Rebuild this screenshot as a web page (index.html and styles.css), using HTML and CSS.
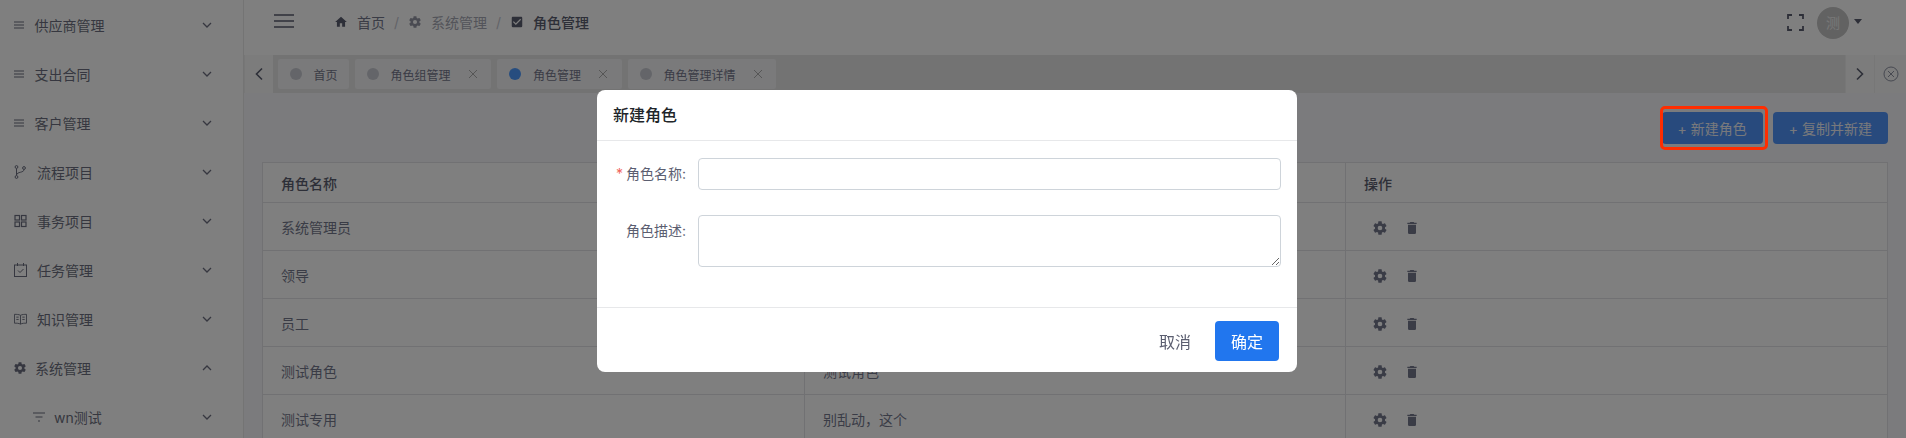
FILE: index.html
```html
<!DOCTYPE html>
<html lang="zh-CN">
<head>
    <meta charset="UTF-8">
    <meta name="viewport" content="width=device-width, initial-scale=1.0">
    <title>角色管理</title>
    <link rel="stylesheet" href="styles.css">
</head>
<body>
    <svg class="sprite" width="0" height="0">
        <symbol id="i-gear" viewBox="0 0 24 24"><path fill="currentColor" d="M12,15.5A3.5,3.5 0 0,1 8.5,12A3.5,3.5 0 0,1 12,8.5A3.5,3.5 0 0,1 15.5,12A3.5,3.5 0 0,1 12,15.5M19.43,12.97C19.47,12.65 19.5,12.33 19.5,12C19.5,11.67 19.47,11.34 19.43,11L21.54,9.37C21.73,9.22 21.78,8.95 21.66,8.73L19.66,5.27C19.54,5.05 19.27,4.96 19.05,5.05L16.56,6.05C16.04,5.66 15.5,5.32 14.87,5.07L14.5,2.42C14.46,2.18 14.25,2 14,2H10C9.75,2 9.54,2.18 9.5,2.42L9.13,5.07C8.5,5.32 7.96,5.66 7.44,6.05L4.95,5.05C4.73,4.96 4.46,5.05 4.34,5.27L2.34,8.73C2.21,8.95 2.27,9.22 2.46,9.37L4.57,11C4.53,11.34 4.5,11.67 4.5,12C4.5,12.33 4.53,12.65 4.57,12.97L2.46,14.63C2.27,14.78 2.21,15.05 2.34,15.27L4.34,18.73C4.46,18.95 4.73,19.03 4.95,18.95L7.44,17.94C7.96,18.34 8.5,18.68 9.13,18.93L9.5,21.58C9.54,21.82 9.75,22 10,22H14C14.25,22 14.46,21.82 14.5,21.58L14.87,18.93C15.5,18.67 16.04,18.34 16.56,17.94L19.05,18.95C19.27,19.03 19.54,18.95 19.66,18.73L21.66,15.27C21.78,15.05 21.73,14.78 21.54,14.63L19.43,12.97Z"/></symbol>
        <symbol id="i-trash" viewBox="0 0 24 24"><path fill="currentColor" d="M19,4H15.5L14.5,3H9.5L8.5,4H5V6H19M6,19A2,2 0 0,0 8,21H16A2,2 0 0,0 18,19V7H6V19Z"/></symbol>
        <symbol id="i-chev" viewBox="0 0 12 12"><path d="M2 4l4 4 4-4" fill="none" stroke="currentColor" stroke-width="1.3"/></symbol>
        <symbol id="i-menu" viewBox="0 0 10 10"><path d="M0 2h10M0 5h10M0 8h10" fill="none" stroke="currentColor" stroke-width="1.1"/></symbol>
        <symbol id="i-x" viewBox="0 0 10 10"><path d="M1 1l8 8M9 1l-8 8" fill="none" stroke="currentColor" stroke-width="0.8"/></symbol>
    </svg>

    <div class="app">
        <aside class="sidebar">
            <div class="nav-item"><svg class="nav-icon"><use href="#i-menu"/></svg><span>供应商管理</span><svg class="chev"><use href="#i-chev"/></svg></div>
            <div class="nav-item"><svg class="nav-icon"><use href="#i-menu"/></svg><span>支出合同</span><svg class="chev"><use href="#i-chev"/></svg></div>
            <div class="nav-item"><svg class="nav-icon"><use href="#i-menu"/></svg><span>客户管理</span><svg class="chev"><use href="#i-chev"/></svg></div>
            <div class="nav-item">
                <svg class="nav-icon wide" viewBox="0 0 13 14" fill="none" stroke="currentColor" stroke-width="1"><circle cx="2.5" cy="2" r="1.4"/><circle cx="2.5" cy="12" r="1.4"/><circle cx="10" cy="3" r="1.4"/><path d="M2.5 3.500v7M10 4.500c0 3.500-7 2-7.500 5.500"/></svg>
                <span>流程项目</span><svg class="chev"><use href="#i-chev"/></svg>
            </div>
            <div class="nav-item">
                <svg class="nav-icon wide" viewBox="0 0 13 13" fill="none" stroke="currentColor" stroke-width="1.2"><rect x="1" y="1" width="4.500" height="4.500"/><rect x="7.500" y="1" width="4.500" height="4.500"/><rect x="1" y="7.500" width="4.500" height="4.500"/><rect x="7.500" y="7.500" width="4.500" height="4.500"/></svg>
                <span>事务项目</span><svg class="chev"><use href="#i-chev"/></svg>
            </div>
            <div class="nav-item">
                <svg class="nav-icon wide" viewBox="0 0 13 14" fill="none" stroke="currentColor" stroke-width="1"><rect x="0.500" y="2" width="12" height="11.500"/><path d="M3.500 0v3M9.500 0v3M4 7.500l2 2 3.500-3.500"/></svg>
                <span>任务管理</span><svg class="chev"><use href="#i-chev"/></svg>
            </div>
            <div class="nav-item">
                <svg class="nav-icon wide" viewBox="0 0 14 12" fill="none" stroke="currentColor" stroke-width="1"><path d="M7 2C5 1 3 1 .5 1v9.500c2.500 0 4.500 0 6.500 1 2-1 4-1 6.500-1V1C11 1 9 1 7 2zM7 2v9.500M2.500 4h2.500M2.500 6.500h2.500M9 4h2.500M9 6.500h2.500"/></svg>
                <span>知识管理</span><svg class="chev"><use href="#i-chev"/></svg>
            </div>
            <div class="nav-item">
                <svg class="nav-icon gear"><use href="#i-gear"/></svg>
                <span>系统管理</span><svg class="chev up"><use href="#i-chev"/></svg>
            </div>
            <div class="nav-item sub">
                <svg class="nav-icon filter" viewBox="0 0 12 10" fill="none" stroke="currentColor" stroke-width="1.1"><path d="M0 1h12M2.500 5h7M5 9h2"/></svg>
                <span>wn测试</span><svg class="chev"><use href="#i-chev"/></svg>
            </div>
        </aside>

        <div class="main">
            <header class="topbar">
                <svg class="hamburger" viewBox="0 0 20 14" fill="none" stroke="currentColor" stroke-width="1.6"><path d="M0 1h20M0 7h20M0 13h20"/></svg>
                <nav class="crumbs">
                    <svg class="crumb-icon" viewBox="0 0 24 24"><path fill="currentColor" d="M10,20V14H14V20H19V12H22L12,3L2,12H5V20H10Z"/></svg>
                    <span>首页</span>
                    <i class="sep">/</i>
                    <svg class="crumb-icon muted"><use href="#i-gear"/></svg>
                    <span class="muted">系统管理</span>
                    <i class="sep">/</i>
                    <svg class="crumb-icon" viewBox="0 0 24 24"><path fill="currentColor" d="M19,3H5C3.890,3 3,3.890 3,5V19A2,2 0 0,0 5,21H19A2,2 0 0,0 21,19V5C21,3.890 20.100,3 19,3M10,17L5,12L6.410,10.590L10,14.170L17.590,6.580L19,8L10,17Z"/></svg>
                    <b>角色管理</b>
                </nav>
                <svg class="fullscreen" viewBox="0 0 17 17" fill="none" stroke="currentColor" stroke-width="1.800"><path d="M1 5V1h4M12 1h4v4M16 12v4h-4M5 16H1v-4"/></svg>
                <div class="avatar">测</div>
                <i class="caret"></i>
            </header>

            <div class="tabs">
                <div class="tab-arrow"><svg viewBox="0 0 10 14" fill="none" stroke="currentColor" stroke-width="1.600"><path d="M8 1.500L2.500 7 8 12.500"/></svg></div>
                <div class="tab-list">
                    <div class="tab"><i class="dot"></i>首页</div>
                    <div class="tab"><i class="dot"></i>角色组管理<svg class="tab-x"><use href="#i-x"/></svg></div>
                    <div class="tab active"><i class="dot"></i>角色管理<svg class="tab-x"><use href="#i-x"/></svg></div>
                    <div class="tab"><i class="dot"></i>角色管理详情<svg class="tab-x"><use href="#i-x"/></svg></div>
                </div>
                <div class="tab-arrow"><svg viewBox="0 0 10 14" fill="none" stroke="currentColor" stroke-width="1.600"><path d="M2 1.500L7.500 7 2 12.500"/></svg></div>
                <div class="tab-close"><svg viewBox="0 0 16 16" fill="none" stroke="currentColor" stroke-width="0.800"><circle cx="8" cy="8" r="7"/><path d="M5 5l6 6M11 5l-6 6"/></svg></div>
            </div>

            <div class="content">
                <div class="toolbar">
                    <button class="btn">+ 新建角色</button>
                    <button class="btn">+ 复制并新建</button>
                </div>
                <table class="grid">
                    <colgroup><col class="col-name"><col class="col-desc"><col></colgroup>
                    <thead>
                        <tr><th>角色名称</th><th>角色描述</th><th>操作</th></tr>
                    </thead>
                    <tbody>
                        <tr><td>系统管理员</td><td>系统管理员</td><td class="ops"><svg><use href="#i-gear"/></svg><svg><use href="#i-trash"/></svg></td></tr>
                        <tr><td>领导</td><td>领导</td><td class="ops"><svg><use href="#i-gear"/></svg><svg><use href="#i-trash"/></svg></td></tr>
                        <tr><td>员工</td><td>员工</td><td class="ops"><svg><use href="#i-gear"/></svg><svg><use href="#i-trash"/></svg></td></tr>
                        <tr><td>测试角色</td><td>测试角色</td><td class="ops"><svg><use href="#i-gear"/></svg><svg><use href="#i-trash"/></svg></td></tr>
                        <tr><td>测试专用</td><td>别乱动，这个</td><td class="ops"><svg><use href="#i-gear"/></svg><svg><use href="#i-trash"/></svg></td></tr>
                    </tbody>
                </table>
            </div>
        </div>
    </div>

    <div class="backdrop"></div>
    <div class="highlight"></div>

    <div class="modal">
        <div class="modal-head">新建角色</div>
        <div class="modal-body">
            <div class="field">
                <label><em>*</em>角色名称:</label>
                <input type="text">
            </div>
            <div class="field">
                <label>角色描述:</label>
                <textarea></textarea>
            </div>
        </div>
        <div class="modal-foot">
            <button class="btn-text">取消</button>
            <button class="btn-primary">确定</button>
        </div>
    </div>
</body>
</html>
```

FILE: styles.css
```css
* {
    box-sizing: border-box;
}

html, body {
    height: 100%;
}

body {
    margin: 0;
    overflow: hidden;
    background-color: #fff;
    color: #74788d;
    font-family: "Inter", "Noto Sans CJK SC", sans-serif;
    font-size: 14px;
}

.sprite {
    position: absolute;
}

.app {
    display: flex;
    height: 100%;
}

/* sidebar */
.sidebar {
    flex: 0 0 244px;
    border-right: 1px solid #e8e8e8;
    background-color: #fff;
}

.nav-item {
    display: flex;
    align-items: center;
    height: 49px;
    padding: 0 30px 0 14px;
    color: #6c6f80;
}

.nav-item span {
    flex: 1;
}

.nav-icon {
    flex: none;
    width: 10px;
    height: 10px;
    margin-right: 10.5px;
    margin-top: 1px;
}

.nav-icon.wide {
    width: 13px;
    height: 14px;
    margin-right: 10px;
}

.nav-icon.gear {
    width: 14px;
    height: 14px;
    margin-right: 8px;
    margin-left: -1px;
}

.nav-icon.filter {
    width: 12px;
    margin-left: 18.5px;
    margin-right: 9.5px;
}

.chev {
    width: 12px;
    height: 12px;
}

.chev.up {
    transform: rotate(180deg);
}

/* top bar */
.main {
    flex: 1;
    min-width: 0;
    display: flex;
    flex-direction: column;
}

.topbar {
    display: flex;
    align-items: flex-start;
    flex: 0 0 55px;
    padding-left: 30px;
    padding-right: 44px;
    background-color: #fff;
}

.hamburger {
    flex: none;
    width: 20px;
    height: 14px;
    margin-top: 14px;
    color: #5b5e70;
}

.crumbs {
    display: flex;
    align-items: center;
    flex: 1;
    height: 16px;
    margin-top: 14px;
    margin-left: 40px;
}

.crumbs span, .crumbs b {
    margin-left: 9px;
}

.crumbs b {
    font-weight: 500;
    color: #5b5e70;
}

.crumb-icon {
    width: 14px;
    height: 14px;
    color: #5b5e70;
}

.muted {
    color: #a6a8b4;
}

.crumb-icon.muted {
    color: #9496a4;
}

.sep {
    width: 23px;
    font-style: normal;
    text-align: center;
    color: #c4c6cf;
}

.fullscreen {
    flex: none;
    width: 17px;
    height: 17px;
    margin-top: 14px;
    color: #5b5e70;
}

.avatar {
    flex: none;
    width: 32px;
    height: 32px;
    margin-top: 7px;
    margin-left: 13px;
    border-radius: 50%;
    background-color: #c4c4c4;
    color: #efefef;
    line-height: 32px;
    text-align: center;
}

.caret {
    flex: none;
    width: 0;
    height: 0;
    margin-top: 19px;
    margin-left: 5px;
    border-left: 4.5px solid transparent;
    border-right: 4.5px solid transparent;
    border-top: 5px solid #5b5e70;
}

/* tabs */
.tabs {
    display: flex;
    flex: 0 0 38px;
    background-color: #e6e6e6;
}

.tab-arrow, .tab-close {
    display: flex;
    align-items: center;
    justify-content: center;
    flex: 0 0 29px;
    border-left: 1px solid #eee;
    background-color: #f8f8f8;
    color: #5b5e70;
}

.tab-arrow svg {
    width: 10px;
    height: 14px;
}

.tab-close {
    flex-basis: 32px;
    color: #74788d;
}

.tab-close svg {
    width: 16px;
    height: 16px;
}

.tab-list {
    display: flex;
    flex: 1;
    align-items: center;
    gap: 6px;
    padding-left: 4.500px;
}

.tab {
    display: flex;
    align-items: center;
    height: 30px;
    padding: 0 11px 0 12px;
    border-radius: 2px;
    background-color: #f4f4f6;
    color: #74788d;
    font-size: 12px;
}

.dot {
    width: 12px;
    height: 12px;
    margin-right: 12px;
    border-radius: 50%;
    background-color: #c9cbd2;
}

.tab.active .dot {
    background-color: #4f9bff;
}

.tab-x {
    width: 10px;
    height: 10px;
    margin-left: 17px;
    margin-right: 2.500px;
    color: #9a9a9a;
}

/* content */
.content {
    flex: 1;
    padding: 19px 18px 0 18px;
    background-color: #f6f7fa;
}

.toolbar {
    display: flex;
    justify-content: flex-end;
    gap: 10px;
    margin-bottom: 18px;
}

.btn {
    height: 32px;
    padding: 0 16px;
    border: none;
    border-radius: 4px;
    background-color: #5194fa;
    color: #f0f3f8;
    font: inherit;
    font-size: 14px;
}

.grid {
    width: 100%;
    table-layout: fixed;
    border-collapse: collapse;
    background-color: #fff;
    color: #74788d;
}

.col-name {
    width: 542px;
}

.col-desc {
    width: 541px;
}

.grid th, .grid td {
    padding: 0 18px;
    border: 1px solid #e2e3e6;
    text-align: left;
}

.grid th {
    height: 40px;
    font-weight: 500;
    color: #5b5e70;
}

.grid td {
    height: 48px;
}

.ops svg {
    width: 16px;
    height: 16px;
    margin-right: 16px;
    color: #74788d;
    vertical-align: middle;
}

.ops svg:first-child {
    margin-left: 8px;
}

/* modal */
.backdrop {
    position: fixed;
    inset: 0;
    background-color: rgba(0, 0, 0, 0.5);
}

.highlight {
    position: absolute;
    left: 1660px;
    top: 106px;
    width: 108px;
    height: 44px;
    border: 3px solid #ff2d00;
    border-radius: 5px;
}

.modal {
    position: absolute;
    left: 597px;
    top: 90px;
    width: 700px;
    height: 282px;
    display: flex;
    flex-direction: column;
    border-radius: 8px;
    background-color: #fff;
    color: #5b5e70;
}

.modal-head {
    flex: 0 0 51px;
    padding: 0 16px;
    border-bottom: 1px solid #e7e8ea;
    color: #212529;
    font-size: 16px;
    font-weight: 500;
    line-height: 50px;
}

.modal-body {
    flex: 1;
    padding: 17px 16px 0;
}

.field {
    display: flex;
    align-items: flex-start;
    margin-bottom: 25px;
}

.field label {
    flex: 0 0 73px;
    margin-right: 12px;
    padding-top: 5px;
    white-space: nowrap;
    text-align: right;
    font-size: 14px;
    color: #5b5e70;
}

.field em {
    margin-left: -10px;
    margin-right: 3px;
    color: #f0645c;
    font-style: normal;
}

.field input, .field textarea {
    display: block;
    width: 583px;
    margin: 0;
    border: 1px solid #ced4da;
    border-radius: 4px;
    background-color: #fff;
    font: inherit;
    outline: none;
}

.field input {
    height: 32px;
}

.field textarea {
    height: 52px;
}

.modal-foot {
    display: flex;
    flex: 0 0 65px;
    align-items: flex-start;
    justify-content: flex-end;
    padding: 13px 18px 0 0;
    border-top: 1px solid #e7e8ea;
}

.btn-text, .btn-primary {
    height: 40px;
    border: none;
    border-radius: 4px;
    font: inherit;
    font-size: 16px;
}

.btn-text {
    width: 64px;
    margin-right: 8px;
    background: none;
    color: #5b5e70;
}

.btn-primary {
    width: 64px;
    background-color: #2176ee;
    color: #fff;
}
```
